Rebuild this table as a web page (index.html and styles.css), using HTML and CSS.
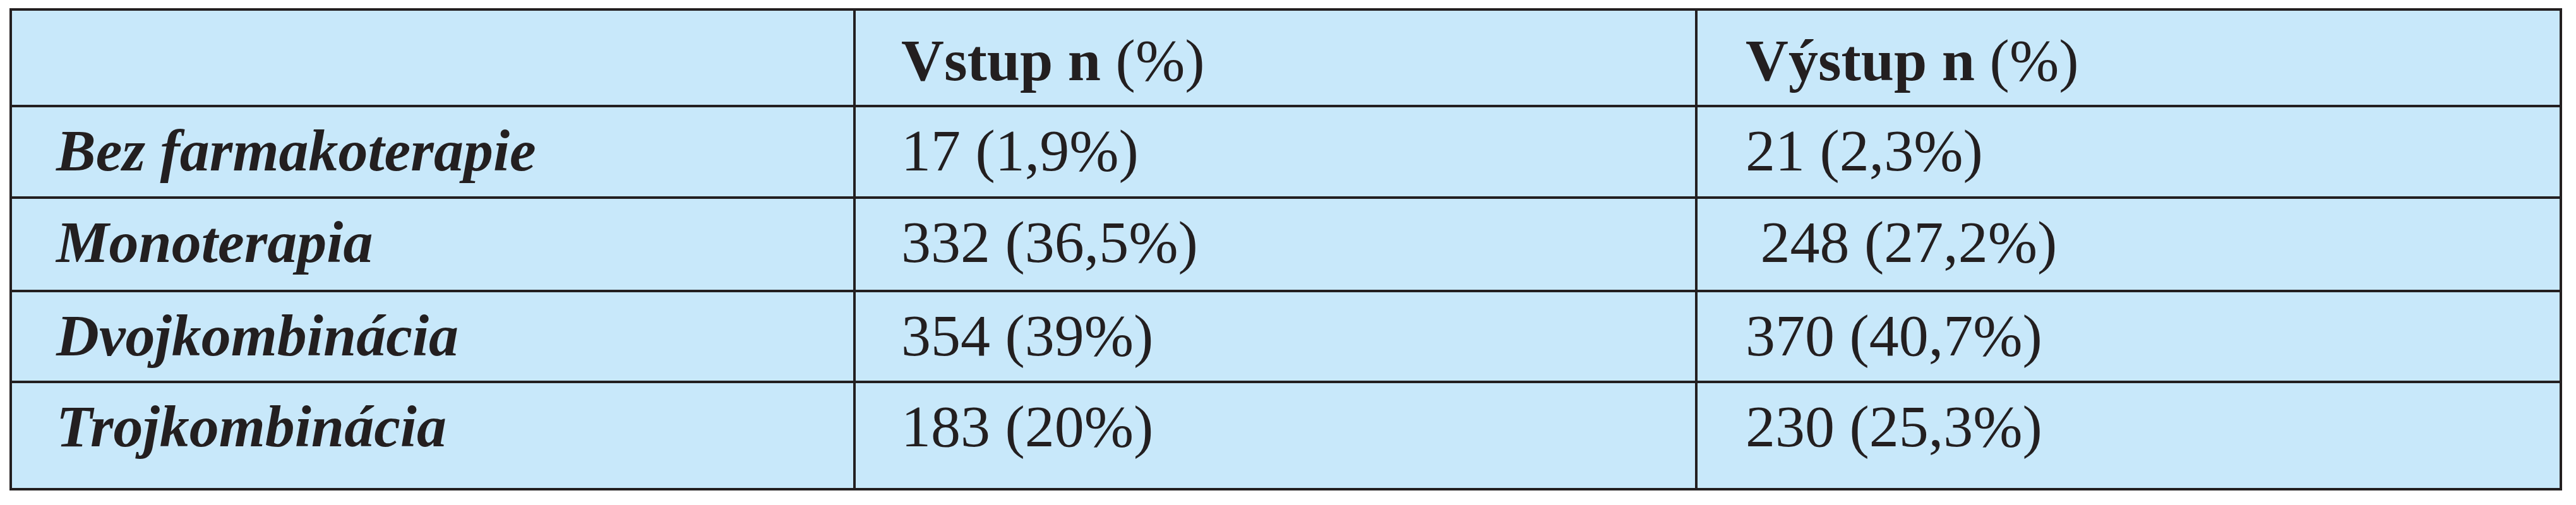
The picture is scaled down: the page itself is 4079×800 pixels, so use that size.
FILE: index.html
```html
<!DOCTYPE html>
<html lang="sk">
<head>
<meta charset="utf-8">
<title>Tabuľka</title>
<link rel="stylesheet" href="styles.css">
</head>
<body>
<div class="table">
  <div class="cell head"></div>
  <div class="cell head"><b>Vstup n</b> (%)</div>
  <div class="cell head c3"><b>Výstup n</b> (%)</div>

  <div class="cell label">Bez farmakoterapie</div>
  <div class="cell">17 (1,9%)</div>
  <div class="cell c3">21 (2,3%)</div>

  <div class="cell label">Monoterapia</div>
  <div class="cell">332 (36,5%)</div>
  <div class="cell c3">&nbsp;248 (27,2%)</div>

  <div class="cell label">Dvojkombinácia</div>
  <div class="cell">354 (39%)</div>
  <div class="cell c3">370 (40,7%)</div>

  <div class="cell label">Trojkombinácia</div>
  <div class="cell">183 (20%)</div>
  <div class="cell c3">230 (25,3%)</div>
</div>
</body>
</html>
```
FILE: styles.css
```css
html, body {
  background: #ffffff;
}
body {
  margin: 13px 0 0 15px;
  font-family: "Liberation Serif", "Times New Roman", serif;
  color: #231f20;
}
.table {
  display: grid;
  grid-template-columns: 1332px 1329px 1365px;
  grid-template-rows: 149px 141px 144px 140px 166px;
  gap: 4px;
  padding: 4px;
  width: 4042px;
  box-sizing: border-box;
  background: #231f20;
}
.cell {
  background: #c8e8fa;
  font-size: 94px;
  line-height: 94px;
  padding: 21px 0 0 72px;
  white-space: nowrap;
}
.cell.head {
  padding-top: 31px;
}
.cell.c3 {
  padding-left: 76px;
}
.cell.label {
  padding-left: 70px;
  font-weight: bold;
  font-style: italic;
}
.cell b {
  font-weight: bold;
}
```
